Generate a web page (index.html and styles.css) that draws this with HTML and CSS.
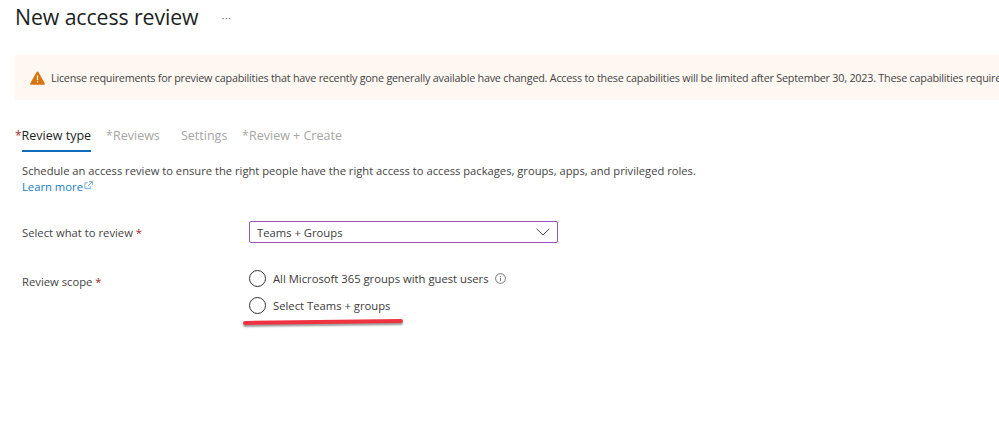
FILE: index.html
```html
<!DOCTYPE html>
<html lang="en">
<head>
<meta charset="utf-8">
<title>New access review</title>
<link rel="stylesheet" href="styles.css">
</head>
<body>
<div class="page">
  <header class="head">
    <h1 class="title">New access review</h1>
    <span class="more">···</span>
  </header>
  <div class="banner">
    <svg class="warn" width="15" height="14" viewBox="0 0 15 14"><path d="M7.5 .5a1 1 0 0 1 .9.5l6.300 11.300a1 1 0 0 1-.9 1.400H1.200a1 1 0 0 1-.9-1.400L6.600 1a1 1 0 0 1 .9-.5z" fill="#d9730d"/><path d="M6.900 4.400h1.200v4.800H6.900zM6.900 10.200h1.200v1.300H6.900z" fill="#fff"/></svg>
    <span class="banner-text">License requirements for preview capabilities that have recently gone generally available have changed. Access to these capabilities will be limited after September 30, 2023. These capabilities require Microsoft Entra ID Governance licenses.</span>
  </div>
  <nav class="tabs">
    <div class="tab active"><span class="star red">*</span><span class="tab-label">Review type</span></div>
    <div class="tab t2"><span class="star">*</span><span class="tab-label">Reviews</span></div>
    <div class="tab t3"><span class="tab-label">Settings</span></div>
    <div class="tab t4"><span class="star">*</span><span class="tab-label">Review + Create</span></div>
  </nav>
  <section class="content">
    <p class="intro">Schedule an access review to ensure the right people have the right access to access packages, groups, apps, and privileged roles.</p>
    <a class="learn">Learn more<svg class="ext" width="9" height="9" viewBox="0 0 10 10" fill="none" stroke="#5a9fd8" stroke-width=".9"><path d="M7.500 5.500v3h-6.500v-6.500h3M5.500 .7h3.800v3.800M9.200 .8L4.500 5.500"/></svg></a>
    <div class="row select-row">
      <label class="label">Select what to review <span class="req">*</span></label>
      <div class="select">
        <span>Teams + Groups</span>
        <svg width="14" height="8" viewBox="0 0 14 8" fill="none" stroke="#444" stroke-width="1"><path d="M.6.8L7 7l6.400-6.200"/></svg>
      </div>
    </div>
    <div class="row scope-row">
      <label class="label">Review scope <span class="req">*</span></label>
      <div class="radios">
        <div class="radio"><span class="circle"></span><span>All Microsoft 365 groups with guest users</span>
          <svg class="info" width="11" height="11" viewBox="0 0 11 11" fill="none" stroke="#555" stroke-width=".8"><circle cx="5.500" cy="5.500" r="4.900"/><path d="M5.500 4.700v3.300M5.500 3v.9"/></svg>
        </div>
        <div class="radio"><span class="circle"></span><span>Select Teams + groups</span></div>
      </div>
    </div>
  </section>
  <div class="mark"></div>
</div>
</body>
</html>
```
FILE: styles.css
```css
* { box-sizing: border-box; }
html, body { margin: 0; padding: 0; background: #fff; overflow: hidden; }
.page {
  position: relative;
  width: 999px;
  height: 423px;
  overflow: hidden;
  font-family: "Open Sans", "Noto Sans", sans-serif;
  font-size: 11.250px;
  color: #3b3a39;
}
.head { display: flex; align-items: center; height: 34px; padding-left: 15px; }
.title { margin: 0; font-size: 21.300px; font-weight: 500; color: #201f1e; letter-spacing: -.1px; line-height: 34px; }
.more { margin-left: 23px; font-size: 11px; color: #666; letter-spacing: .5px; }
.banner {
  display: flex;
  align-items: center;
  margin: 21px 0 0 15px;
  height: 45px;
  padding-left: 15px;
  background: #fef7f2;
  white-space: nowrap;
}
.warn { flex: none; margin-right: 6px; }
.banner-text { color: #444; font-size: 10.800px; letter-spacing: -.23px; }
.tabs { display: flex; height: 34px; margin-top: 19px; padding-left: 15px; }
.tab { display: flex; align-items: flex-start; color: #a6a6a6; font-size: 12.500px; line-height: 34px; height: 32px; white-space: nowrap; }
.tab .star { width: 7px; font-size: 12px; }
.tab.active { color: #201f1e; position: relative; width: 76px; font-weight: 500; }
.tab.active::after { content: ""; position: absolute; left: 7px; right: 0; bottom: -1px; height: 2px; background: #0f6cbd; }
.star.red { color: #a4262c; }
.t2 { margin-left: 15px; width: 75px; }
.t3 { width: 61px; }
.t4 { width: 110px; }
.content { padding-left: 22px; }
.intro { margin: 0; padding-top: 10px; font-size: 11.200px; line-height: 16px; color: #444; white-space: nowrap; }
.learn { display: inline-flex; align-items: center; color: #0f7bc9; line-height: 14px; }
.ext { margin-left: 1px; margin-bottom: 3px; }
.row { display: flex; }
.label { width: 227px; color: #444; }
.req { color: #a4262c; }
.select-row { margin-top: 27px; align-items: center; }
.select {
  display: flex;
  align-items: center;
  justify-content: space-between;
  width: 309px;
  height: 22px;
  padding: 0 7px;
  border: 1px solid #9c4fb5;
  border-radius: 2px;
}
.scope-row { margin-top: 27px; }
.scope-row .label { padding-top: 4px; }
.radios { display: flex; flex-direction: column; gap: 10px; }
.radio { display: flex; align-items: center; height: 17px; }
.circle { width: 17px; height: 17px; margin-right: 7px; border: 1px solid #333; border-radius: 50%; }
.info { margin-left: 6px; }
.mark {
  position: absolute;
  left: 243px;
  top: 320px;
  width: 160px;
  height: 4px;
  background: #ef3340;
  border-radius: 2px;
  box-shadow: 0 2px 2px rgba(0, 0, 0, .4);
  transform: rotate(-.7deg);
}
```
